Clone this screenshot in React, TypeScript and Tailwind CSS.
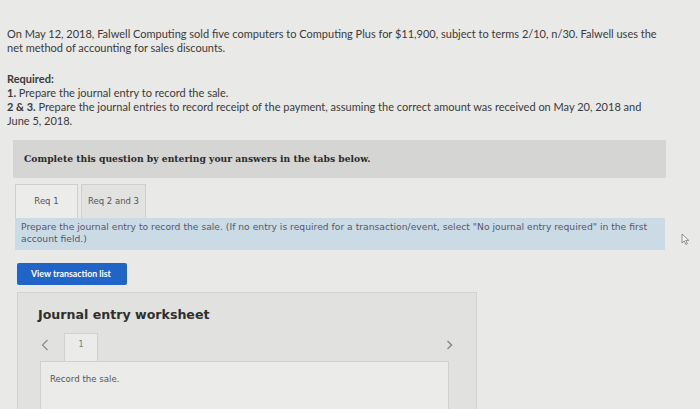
import React from "react";

export default function App() {
  return (
    <div className="w-[700px] h-[409px] overflow-hidden bg-[#e9e9e7] text-[#3a3a3a] [font-family:Lato,'Open_Sans',sans-serif]">
      <div className="pt-[27px] pl-[7px] pr-[38px] text-[11px] leading-[14px]">
        <p>
          On May 12, 2018, Falwell Computing sold five computers to Computing Plus for $11,900, subject to terms 2/10, n/30. Falwell uses the net method of accounting for sales discounts.
        </p>
        <div className="mt-[17px]">
          <p className="font-bold">Required:</p>
          <p>
            <span className="font-bold">1.</span> Prepare the journal entry to record the sale.
          </p>
          <p>
            <span className="font-bold">2 &amp; 3.</span> Prepare the journal entries to record receipt of the payment, assuming the correct amount was received on May 20, 2018 and June 5, 2018.
          </p>
        </div>
      </div>

      <div className="ml-[13px] w-[653px] mt-[12px] h-[38px] bg-[#d5d5d3] flex items-center pl-[11px]">
        <span className="text-[9.2px] font-bold text-[#2a2a2a] [font-family:'DejaVu_Serif',serif]">
          Complete this question by entering your answers in the tabs below.
        </span>
      </div>

      <div className="ml-[15px] mt-[6px] flex gap-[3px] [font-family:'DejaVu_Sans',sans-serif] text-[8.5px] text-[#555]">
        <div className="w-[63px] h-[34px] flex items-center justify-center bg-[#ececea] border border-b-0 border-[#cfcfcd]">Req 1</div>
        <div className="w-[65px] h-[34px] flex items-center justify-center bg-[#e2e2e0] border border-b-0 border-[#cfcfcd]">Req 2 and 3</div>
      </div>

      <div className="relative ml-[15px] w-[650px] h-[32px] bg-[#cadbe6] pl-[6px] pt-[3px] text-[9.2px] leading-[12px] text-[#5a5568] [font-family:'DejaVu_Sans',sans-serif]">
        Prepare the journal entry to record the sale. (If no entry is required for a transaction/event, select "No journal entry required" in the first account field.)
        <svg className="absolute left-[666px] top-[15px]" width="9" height="12" viewBox="0 0 9 12">
          <path d="M1 1 L1 10 L3.2 8 L5 11.5 L6.4 10.8 L4.7 7.4 L7.8 7.4 Z" fill="#f4f4f4" stroke="#777" strokeWidth="0.8" strokeLinejoin="round" />
        </svg>
      </div>

      <div className="ml-[17px] mt-[13px] w-[110px] h-[22px] bg-[#1f64c6] rounded-[2px] flex items-center pl-[14px] text-white text-[8.8px] font-bold [font-family:Lato,sans-serif]">
        View transaction list
      </div>

      <div className="ml-[17px] mt-[7px] w-[460px] h-[130px] bg-[#e1e1df] border border-[#d2d2d0] pl-[20px] pt-[13px]">
        <div className="text-[12.6px] leading-[18px] font-bold text-[#2e2e2e] [font-family:'DejaVu_Sans',sans-serif]">Journal entry worksheet</div>
        <div className="mt-[9px] flex items-end h-[28px] pr-[22px]">
          <svg className="mb-[10px] ml-[3px]" width="8" height="12" viewBox="0 0 8 12">
            <path d="M6.5 1 L1.5 6 L6.5 11" fill="none" stroke="#8c8c8c" strokeWidth="1.2" />
          </svg>
          <div className="ml-[15px] w-[34px] h-[28px] bg-[#ebebea] border border-b-0 border-[#d0d0ce] flex justify-center pt-[5px] text-[8px] text-[#777] [font-family:'DejaVu_Sans',sans-serif]">1</div>
          <svg className="ml-auto mb-[10px]" width="8" height="12" viewBox="0 0 8 12">
            <path d="M1.5 2 L5.5 6 L1.5 10" fill="none" stroke="#8c8c8c" strokeWidth="1.6" />
          </svg>
        </div>
        <div className="ml-[2px] w-[409px] h-[60px] bg-[#ebebea] border border-[#d0d0ce] pl-[9px] pt-[11px] text-[8.6px] text-[#555] [font-family:'DejaVu_Sans',sans-serif]">
          Record the sale.
        </div>
      </div>
    </div>
  );
}
